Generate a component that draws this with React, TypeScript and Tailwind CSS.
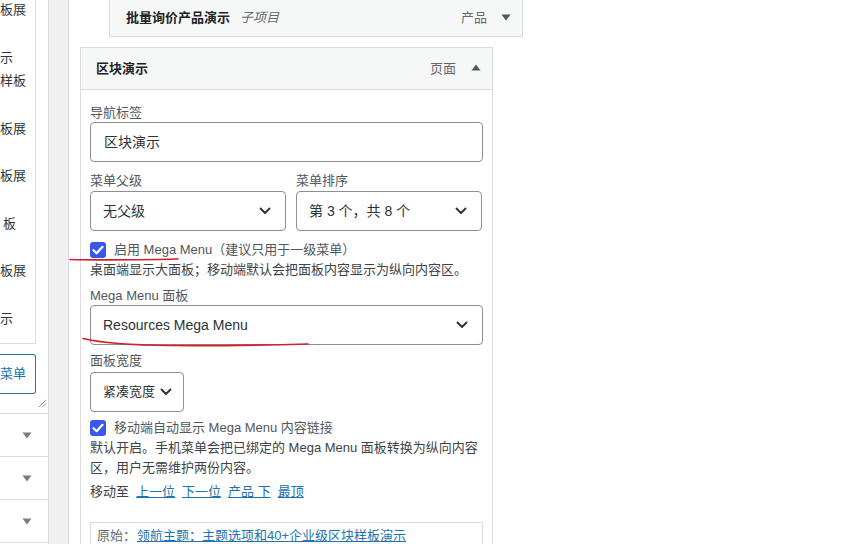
import type { ReactNode } from 'react'

const FONT = '"Liberation Sans", "Noto Sans CJK SC", sans-serif'

function Chevron() {
  return (
    <svg width="12" height="8" viewBox="0 0 12 8" className="shrink-0">
      <path d="M1.5 1.5 6 6l4.5-4.5" fill="none" stroke="#2c3338" strokeWidth="1.9" strokeLinecap="round" strokeLinejoin="round" />
    </svg>
  )
}

function Tri({ up = false, color = '#50575e' }: { up?: boolean; color?: string }) {
  return (
    <svg width="10" height="7" viewBox="0 0 10 7" className="shrink-0">
      {up ? <path d="M5 0.5 9.5 6.5H0.5Z" fill={color} /> : <path d="M0.5 0.5h9L5 6.5Z" fill={color} />}
    </svg>
  )
}

function Check() {
  return (
    <span className="flex h-[16px] w-[16px] shrink-0 items-center justify-center rounded-[3px] bg-[#3858e9]">
      <svg width="12" height="10" viewBox="0 0 12 10">
        <path d="M1.5 5.2 4.6 8.2 10.5 1.8" fill="none" stroke="#fff" strokeWidth="2.2" strokeLinecap="round" strokeLinejoin="round" />
      </svg>
    </span>
  )
}

function Select({ children, className = '' }: { children: ReactNode; className?: string }) {
  return (
    <div className={`flex h-[40px] shrink-0 items-center justify-between rounded-[4px] border border-[#8c8f94] bg-white pl-[12px] pr-[14px] text-[14px] text-[#2c3338] ${className}`}>
      <span className="whitespace-nowrap">{children}</span>
      <Chevron />
    </div>
  )
}

// tail ends of the page titles in the (scrolled) checklist on the left
const leftLines: { text: string; pl: number }[] = [
  { text: '板展', pl: 0 },
  { text: '', pl: 0 },
  { text: '示', pl: 0 },
  { text: '样板', pl: 0 },
  { text: '', pl: 0 },
  { text: '板展', pl: 0 },
  { text: '', pl: 0 },
  { text: '板展', pl: 0 },
  { text: '', pl: 0 },
  { text: '板', pl: 3 },
  { text: '', pl: 0 },
  { text: '板展', pl: 0 },
  { text: '', pl: 0 },
  { text: '示', pl: 0 },
]

function LeftColumn() {
  return (
    <div className="flex w-[49px] shrink-0 flex-col border-r border-[#dcdcde] bg-white">
      <div className="h-[344px] w-[36px] shrink-0 overflow-hidden border-r border-b border-[#dcdcde]">
        <div className="-mt-[2px] flex flex-col text-[13px] text-[#2c3338]">
          {leftLines.map((l, i) => (
            <div key={i} className="h-[23.75px] shrink-0 whitespace-nowrap leading-[23.75px]" style={{ paddingLeft: l.pl }}>
              {l.text}
            </div>
          ))}
        </div>
      </div>
      <div className="mt-[10px] flex h-[40px] w-[36px] shrink-0 items-center rounded-r-[3px] border border-l-0 border-[#2271b1] text-[13px] text-[#2271b1]">
        <span>菜单</span>
      </div>
      <div className="relative h-[19px] shrink-0">
        <svg width="9" height="9" viewBox="0 0 9 9" className="absolute right-[1px] top-[5px]">
          <path d="M8 1 1 8M8 4.5 4.5 8" stroke="#8c8f94" strokeWidth="1" />
        </svg>
      </div>
      {[0, 1, 2, 3].map((i) => (
        <div key={i} className="flex h-[43px] shrink-0 items-center justify-end border-t border-[#dcdcde] pr-[16px]">
          <Tri color="#787c82" />
        </div>
      ))}
    </div>
  )
}

export default function App() {
  return (
    <div className="relative flex h-[544px] w-[856px] overflow-hidden bg-white" style={{ fontFamily: FONT }}>
      <LeftColumn />
      <div className="w-[19px] shrink-0 bg-[#f0f0f1]" />
      <div className="flex flex-1 flex-col border-l border-[#dcdcde] bg-white">
        {/* sub item */}
        <div className="-mt-[6px] ml-[40px] flex h-[43px] w-[414px] shrink-0 items-center border border-[#dcdcde] bg-[#f6f7f7] pl-[16px] pr-[11px] pt-[4px] text-[13px]">
          <span className="font-bold text-[#1d2327]">批量询价产品演示</span>
          <span className="ml-[10px] italic text-[#646970]">子项目</span>
          <span className="ml-auto text-[#646970]">产品</span>
          <span className="ml-[14px]">
            <Tri />
          </span>
        </div>

        {/* open item */}
        <div className="ml-[11px] mt-[10px] flex w-[413px] shrink-0 flex-col">
          <div className="flex h-[43px] shrink-0 items-center border border-[#dcdcde] bg-[#f6f7f7] pl-[15px] pr-[11px] text-[13px]">
            <span className="font-bold text-[#1d2327]">区块演示</span>
            <span className="ml-auto text-[#646970]">页面</span>
            <span className="-mt-[3px] ml-[15px]">
              <Tri up />
            </span>
          </div>
          <div className="flex min-h-[460px] flex-col border-x border-[#dcdcde] px-[9px] pt-[14px] text-[13px] text-[#3c434a]">
            <label className="leading-[18px] text-[#50575e]">导航标签</label>
            <div className="flex h-[40px] shrink-0 items-center rounded-[4px] border border-[#8c8f94] pl-[13px] text-[14px] text-[#2c3338]">区块演示</div>

            <div className="mt-[10px] grid grid-cols-[196px_186px] gap-x-[10px]">
              <div className="flex flex-col">
                <label className="mb-[1px] leading-[18px] text-[#50575e]">菜单父级</label>
                <Select>无父级</Select>
              </div>
              <div className="flex flex-col">
                <label className="mb-[1px] leading-[18px] text-[#50575e]">菜单排序</label>
                <Select>第 3 个，共 8 个</Select>
              </div>
            </div>

            <div className="mt-[9px] flex h-[20px] shrink-0 items-center gap-[8px] text-[#50575e]">
              <Check />
              <span>启用 Mega Menu（建议只用于一级菜单）</span>
            </div>
            <p className="leading-[20px]">桌面端显示大面板；移动端默认会把面板内容显示为纵向内容区。</p>

            <label className="mt-[7px] leading-[18px] text-[#50575e]">Mega Menu 面板</label>
            <Select>Resources Mega Menu</Select>

            <label className="mt-[7px] leading-[18px] text-[#50575e]">面板宽度</label>
            <Select className="mt-[2px] w-[94px] !pr-[11px] !text-[13px]">紧凑宽度</Select>

            <div className="mt-[6px] flex h-[20px] shrink-0 items-center gap-[8px] text-[#50575e]">
              <Check />
              <span>移动端自动显示 Mega Menu 内容链接</span>
            </div>
            <p className="leading-[20px]">
              默认开启。手机菜单会把已绑定的 Mega Menu 面板转换为纵向内容
              <br />
              区，用户无需维护两份内容。
            </p>

            <div className="mt-[4px] flex gap-[7px] leading-[20px]">
              <span>移动至</span>
              <a className="text-[#2271b1] underline">上一位</a>
              <a className="text-[#2271b1] underline">下一位</a>
              <a className="text-[#2271b1] underline">产品 下</a>
              <a className="text-[#2271b1] underline">最顶</a>
            </div>

            <div className="mt-[20px] flex h-[40px] shrink-0 border border-[#dcdcde] pl-[6px] pt-[3px] leading-[20px]">
              <span className="text-[#646970]">原始：</span>
              <a className="ml-[1px] text-[#2271b1] underline">领航主题：主题选项和40+企业级区块样板演示</a>
            </div>
          </div>
        </div>
      </div>

      {/* hand-drawn annotation */}
      <svg className="pointer-events-none absolute inset-0" width="856" height="544" viewBox="0 0 856 544">
        <path d="M70 259.5 Q 110 260.5 178 259" fill="none" stroke="#d0202a" strokeWidth="1.6" strokeLinecap="round" />
        <path d="M83 338.5 Q 110 345 170 345.5 T 308 344" fill="none" stroke="#d0202a" strokeWidth="1.6" strokeLinecap="round" />
      </svg>
    </div>
  )
}
